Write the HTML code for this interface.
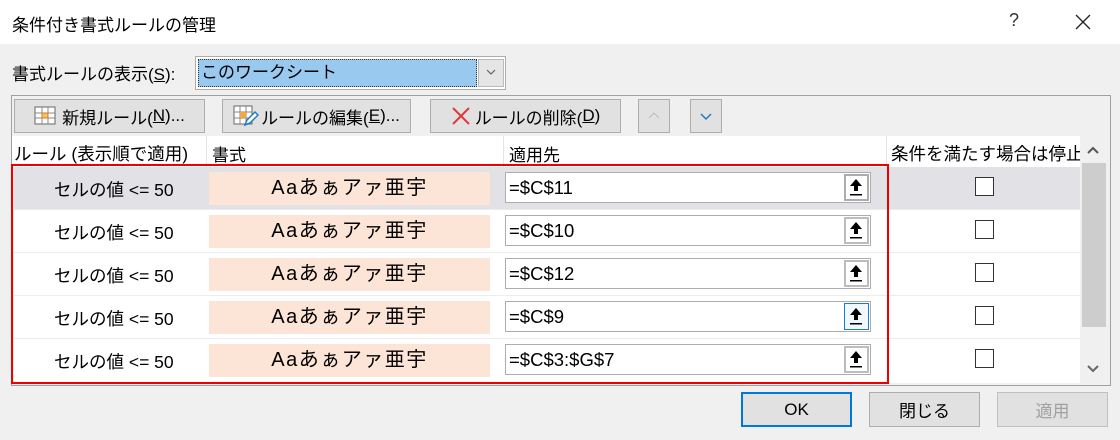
<!DOCTYPE html>
<html><head><meta charset="utf-8"><style>
*{margin:0;padding:0;box-sizing:border-box}
body{width:1120px;height:440px;background:#f0f0f0;font-family:"Liberation Sans","Noto Sans CJK JP",sans-serif;color:#000;position:relative;overflow:hidden;font-size:17px}
.a{position:absolute}
.btn{position:absolute;background:#e1e1e1;border:1px solid #adadad;display:flex;align-items:center;justify-content:center;font-size:17px}
.row{position:absolute;left:14px;width:1066px;height:43px;border-bottom:1px solid #ececec;background:#fff}
.rl{position:absolute;left:40px;top:10px;font-size:17.5px}
.fmt{position:absolute;left:195px;top:5px;width:281px;height:33px;background:#fce4d6;text-align:center;font-size:20px;line-height:33px;letter-spacing:1.5px}
.inp{position:absolute;left:491px;top:5px;width:366px;height:31px;border:1px solid #adadad;background:#fff;font-size:18.5px;padding-left:3px;line-height:30px}
.ib{position:absolute;right:1px;top:1px;width:25px;height:27px;background:#fff;border:2px solid #bdbdbd}
.cb{position:absolute;left:961px;top:10px;width:19px;height:19px;border:1px solid #333;background:#fff}
</style></head><body>
<div class="a" style="left:0;top:0;width:1120px;height:44px;background:#fff"></div>
<div class="a" style="left:12px;top:11px;font-size:17px">条件付き書式ルールの管理</div>
<div class="a" style="left:1009px;top:10px;font-size:18px;color:#333">?</div>
<svg class="a" style="left:1075px;top:14px" width="16" height="16"><path d="M1 1L15 15M15 1L1 15" stroke="#222" stroke-width="1.3"/></svg>

<div class="a" style="left:12px;top:60px">書式ルールの表示(<u>S</u>):</div>
<div class="a" style="left:195px;top:56px;width:311px;height:34px;border:1px solid #adadad;background:#fff"></div>
<div class="a" style="left:198px;top:59px;width:279px;height:28px;background:#99c9ef;border:1px dotted #333;padding-left:2px;line-height:26px">このワークシート</div>
<div class="a" style="left:478px;top:59px;width:26px;height:28px;background:#e5e5e5;border:1px solid #bbb"></div>
<svg class="a" style="left:484px;top:67px" width="14" height="10"><path d="M3 3L7 7L11 3" stroke="#555" fill="none"/></svg>

<div class="a" style="left:11px;top:95px;width:1100px;height:291px;border:1px solid #a0a0a0;background:#f0f0f0"></div>
<div class="btn" style="left:14px;top:99px;width:191px;height:34px">
<svg width="24" height="20" style="margin-right:4px"><rect x="1" y="1" width="20" height="17" fill="#fff" stroke="#666"/><path d="M1 7H21M1 12H21M8 1V18M14 1V18" stroke="#888"/><rect x="8" y="7" width="6" height="5" fill="#f4c26a" stroke="#d07c1a"/></svg>新規ルール(<u>N</u>)...</div>
<div class="btn" style="left:222px;top:99px;width:189px;height:34px">
<svg width="26" height="22" style="margin-right:2px"><rect x="1" y="1" width="18" height="18" fill="#fff" stroke="#666"/><path d="M1 7H19M1 13H19M7 1V19M13 1V19" stroke="#888"/><rect x="7" y="7" width="6" height="6" fill="#f4a640"/><path d="M12 20L14 15L22 7L25 10L17 18Z" fill="#fff" stroke="#1e7bc4" stroke-width="1.5"/></svg>ルールの編集(<u>E</u>)...</div>
<div class="btn" style="left:430px;top:99px;width:191px;height:34px">
<svg width="20" height="20" style="margin-right:4px"><path d="M2 2L18 18M18 2L2 18" stroke="#e23a3a" stroke-width="2"/></svg>ルールの削除(<u>D</u>)</div>
<div class="btn" style="left:638px;top:99px;width:32px;height:34px"><svg width="14" height="10"><path d="M2 7L7 2L12 7" stroke="#bbb" fill="none"/></svg></div>
<div class="btn" style="left:690px;top:99px;width:32px;height:34px"><svg width="14" height="10"><path d="M2 3L7 8L12 3" stroke="#1e7bc4" fill="none" stroke-width="1.5"/></svg></div>

<div class="a" style="left:12px;top:136px;width:1068px;height:31px;background:#fff"></div>
<div class="a" style="left:14px;top:141px;font-size:17.5px">ルール (表示順で適用)</div>
<div class="a" style="left:206px;top:136px;width:1px;height:31px;background:#e5e5e5"></div>
<div class="a" style="left:212px;top:141px">書式</div>
<div class="a" style="left:503px;top:136px;width:1px;height:31px;background:#e5e5e5"></div>
<div class="a" style="left:509px;top:141px">適用先</div>
<div class="a" style="left:886px;top:136px;width:1px;height:31px;background:#e5e5e5"></div>
<div class="a" style="left:891px;top:141px;font-size:17.5px">条件を満たす場合は停止</div>

<div class="row" style="top:167px;background:#e1e1e6"><div class="rl">セルの値 &lt;= 50</div><div class="fmt">Aaあぁアァ亜宇</div><div class="inp">=$C$11<div class="ib" style="border-color:#adadad"></div></div><div class="cb"></div></div>
<div class="row" style="top:210px"><div class="rl">セルの値 &lt;= 50</div><div class="fmt">Aaあぁアァ亜宇</div><div class="inp">=$C$10<div class="ib"></div></div><div class="cb"></div></div>
<div class="row" style="top:253px"><div class="rl">セルの値 &lt;= 50</div><div class="fmt">Aaあぁアァ亜宇</div><div class="inp">=$C$12<div class="ib"></div></div><div class="cb"></div></div>
<div class="row" style="top:296px"><div class="rl">セルの値 &lt;= 50</div><div class="fmt">Aaあぁアァ亜宇</div><div class="inp">=$C$9<div class="ib" style="border:1px solid #1e7bc4;background:#f0f7fd"></div></div><div class="cb"></div></div>
<div class="row" style="top:339px;height:44px;border:none"><div class="rl">セルの値 &lt;= 50</div><div class="fmt">Aaあぁアァ亜宇</div><div class="inp">=$C$3:$G$7<div class="ib"></div></div><div class="cb"></div></div>

<svg class="a" style="left:846px;top:176px" width="20" height="200">
<g id="ar"><path d="M10 3L4 10H8V15H12V10H16Z" fill="#000"/><rect x="4" y="18" width="12" height="1.5" fill="#000"/></g>
<use href="#ar" y="43"/><use href="#ar" y="86"/><use href="#ar" y="129"/><use href="#ar" y="172"/>
</svg>

<div class="a" style="left:11px;top:164px;width:878px;height:220px;border:2px solid #e00"></div>

<div class="a" style="left:1080px;top:136px;width:29px;height:249px;background:#f0f0f0"></div>
<div class="a" style="left:1082px;top:163px;width:24px;height:164px;background:#cdcdcd"></div>
<svg class="a" style="left:1086px;top:146px" width="14" height="10"><path d="M2 7L7 2L12 7" stroke="#555" fill="none" stroke-width="2"/></svg>
<svg class="a" style="left:1086px;top:363px" width="14" height="10"><path d="M2 3L7 8L12 3" stroke="#666" fill="none" stroke-width="2"/></svg>

<div class="btn" style="left:741px;top:392px;width:111px;height:35px;border:2px solid #0078d7">OK</div>
<div class="btn" style="left:869px;top:392px;width:111px;height:35px">閉じる</div>
<div class="btn" style="left:997px;top:392px;width:111px;height:35px;color:#a0a0a0;border-color:#c0c0c0">適用</div>
</body></html>
